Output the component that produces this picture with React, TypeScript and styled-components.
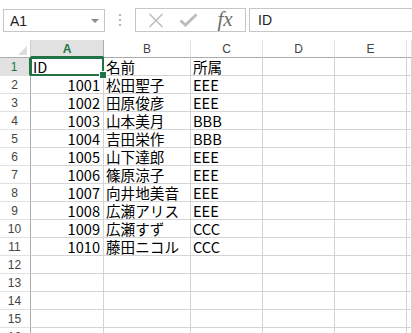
import React from "react";
import styled, { createGlobalStyle, css } from "styled-components";

const GlobalStyle = createGlobalStyle`
  html, body { margin: 0; padding: 0; background: #ffffff; }
  * { box-sizing: border-box; }
`;

const GREEN = "#217346";
const GRID = "#d4d4d4";
const CELL_FONT = `"Noto Sans CJK JP", "Liberation Sans", sans-serif`;
const UI_FONT = `"Liberation Sans", "Noto Sans", sans-serif`;

const Page = styled.div`
  width: 412px;
  height: 333px;
  overflow: hidden;
  background: #ffffff;
  display: flex;
  flex-direction: column;
`;

const FormulaBar = styled.div`
  height: 40px;
  flex: none;
  display: flex;
  align-items: flex-start;
  padding-top: 8px;
`;

const NameBox = styled.div`
  margin-left: 3px;
  margin-top: 1px;
  width: 102px;
  height: 23px;
  border: 1px solid #c6c6c6;
  display: flex;
  align-items: center;
  justify-content: space-between;
  padding: 0 5px 0 6px;
  font-family: ${UI_FONT};
  font-size: 14px;
  color: #222;
`;

const DropArrow = styled.span`
  width: 0;
  height: 0;
  border-left: 4px solid transparent;
  border-right: 4px solid transparent;
  border-top: 4px solid #8a8a8a;
`;

const Dots = styled.div`
  width: 30px;
  height: 23px;
  display: flex;
  flex-direction: column;
  align-items: center;
  justify-content: center;
  gap: 3px;
  & > span {
    width: 2px;
    height: 2px;
    background: #b8b8b8;
  }
`;

const ButtonGroup = styled.div`
  width: 111px;
  height: 24px;
  border: 1px solid #c6c6c6;
  display: flex;
  align-items: center;
  padding-left: 9px;
`;

const IconSlot = styled.div<{ $w: number }>`
  width: ${(p) => p.$w}px;
  height: 22px;
  display: flex;
  align-items: center;
  justify-content: center;
`;

const Fx = styled.span`
  font-family: "Liberation Serif", "DejaVu Serif", serif;
  font-style: italic;
  font-size: 21px;
  color: #6e6e6e;
  line-height: 1;
  margin-top: -1px;
`;

const FormulaInput = styled.div`
  flex: 1;
  margin-left: 3px;
  height: 24px;
  border: 1px solid #c6c6c6;
  border-right: none;
  display: flex;
  align-items: center;
  padding-left: 8px;
  font-family: ${UI_FONT};
  font-size: 14px;
  color: #222;
`;

const Sheet = styled.div`
  display: grid;
  grid-template-columns: 31px 73px 87px 72px 72px 72px 1fr;
  grid-auto-rows: 18px;
`;

const Corner = styled.div`
  position: relative;
  border-right: 1px solid #cfcfcf;
  border-bottom: 1px solid #ababab;
  &::after {
    content: "";
    position: absolute;
    right: 3px;
    bottom: 2px;
    width: 0;
    height: 0;
    border-left: 9px solid transparent;
    border-bottom: 9px solid #dcdcdc;
  }
`;

const ColHead = styled.div<{ $active?: boolean }>`
  border-right: 1px solid #e1e1e1;
  border-bottom: 1px solid #ababab;
  display: flex;
  align-items: center;
  justify-content: center;
  font-family: ${UI_FONT};
  font-size: 12px;
  color: #444;
  padding-top: 1px;
  ${(p) =>
    p.$active &&
    css`
      background: #e1e1e1;
      color: ${GREEN};
      font-weight: bold;
      border-bottom: 2px solid ${GREEN};
      border-right-color: #ababab;
    `}
`;

const RowHead = styled.div<{ $active?: boolean }>`
  border-right: 1px solid #ababab;
  border-bottom: 1px solid #e1e1e1;
  display: flex;
  align-items: flex-end;
  justify-content: center;
  padding-bottom: 1px;
  padding-right: 1px;
  font-family: ${UI_FONT};
  font-size: 12px;
  line-height: 14px;
  color: #444;
  ${(p) =>
    p.$active &&
    css`
      background: #e1e1e1;
      color: ${GREEN};
      border-right: 2px solid ${GREEN};
    `}
`;

const Cell = styled.div<{ $num?: boolean; $selected?: boolean }>`
  position: relative;
  border-right: 1px solid ${GRID};
  border-bottom: 1px solid ${GRID};
  display: flex;
  align-items: flex-end;
  justify-content: ${(p) => (p.$num ? "flex-end" : "flex-start")};
  padding: 0 ${(p) => (p.$num ? "3px" : "0")} 0 ${(p) => (p.$num ? "0" : "2px")};
  font-family: ${CELL_FONT};
  font-size: 14.6px;
  line-height: 17px;
  color: #000;
  white-space: nowrap;
  overflow: visible;
  ${(p) =>
    p.$selected &&
    css`
      z-index: 1;
      &::before {
        content: "";
        position: absolute;
        left: -1px;
        top: -1px;
        right: -1px;
        bottom: -1px;
        border: 2px solid ${GREEN};
        pointer-events: none;
      }
      &::after {
        content: "";
        position: absolute;
        right: -4px;
        bottom: -4px;
        width: 6px;
        height: 6px;
        background: ${GREEN};
        border: 1px solid #ffffff;
      }
    `}
`;

const columns = ["A", "B", "C", "D", "E", ""];

const data: [string, string, string][] = [
  ["ID", "名前", "所属"],
  ["1001", "松田聖子", "EEE"],
  ["1002", "田原俊彦", "EEE"],
  ["1003", "山本美月", "BBB"],
  ["1004", "吉田栄作", "BBB"],
  ["1005", "山下達郎", "EEE"],
  ["1006", "篠原涼子", "EEE"],
  ["1007", "向井地美音", "EEE"],
  ["1008", "広瀬アリス", "EEE"],
  ["1009", "広瀬すず", "CCC"],
  ["1010", "藤田ニコル", "CCC"],
];

const TOTAL_ROWS = 16;

export default function App() {
  const rows = Array.from({ length: TOTAL_ROWS }, (_, i) => i + 1);
  return (
    <>
      <GlobalStyle />
      <Page>
        <FormulaBar>
          <NameBox>
            <span>A1</span>
            <DropArrow />
          </NameBox>
          <Dots>
            <span />
            <span />
            <span />
          </Dots>
          <ButtonGroup>
            <IconSlot $w={22}>
              <svg width="16" height="15" viewBox="0 0 16 15">
                <path d="M1.5 1 L14.5 14 M14.5 1 L1.5 14" stroke="#bdbdbd" strokeWidth="1.6" fill="none" />
              </svg>
            </IconSlot>
            <IconSlot $w={42}>
              <svg width="19" height="14" viewBox="0 0 19 14">
                <path d="M1.5 7.5 L6.5 12 L17.5 1.5" stroke="#bdbdbd" strokeWidth="3" fill="none" strokeLinejoin="miter" />
              </svg>
            </IconSlot>
            <IconSlot $w={32}>
              <Fx>fx</Fx>
            </IconSlot>
          </ButtonGroup>
          <FormulaInput>ID</FormulaInput>
        </FormulaBar>
        <Sheet>
          <Corner />
          {columns.map((c, i) => (
            <ColHead key={"h" + i} $active={c === "A"}>
              {c}
            </ColHead>
          ))}
          {rows.map((r) => {
            const row = data[r - 1];
            return (
              <React.Fragment key={r}>
                <RowHead $active={r === 1}>{r}</RowHead>
                <Cell $num={!!row && /^\d+$/.test(row[0])} $selected={r === 1}>
                  {row ? row[0] : ""}
                </Cell>
                <Cell>{row ? row[1] : ""}</Cell>
                <Cell>{row ? row[2] : ""}</Cell>
                <Cell />
                <Cell />
                <Cell />
              </React.Fragment>
            );
          })}
        </Sheet>
      </Page>
    </>
  );
}
